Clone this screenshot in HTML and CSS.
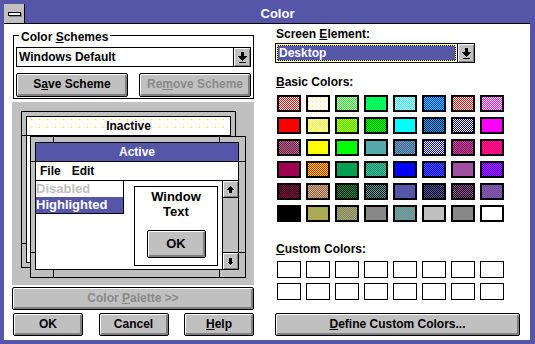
FILE: index.html
```html
<!DOCTYPE html>
<html lang="en">
<head>
    <meta charset="UTF-8">
    <title>Color</title>
    <link rel="stylesheet" href="styles.css">
</head>
<body>
<div class="window">
    <div class="titlebar">
        <div class="sysmenu"><span class="sysbar"></span></div>
        <div class="title">Color</div>
    </div>
    <div class="client">
        <div class="left">
            <div class="group">
                <span class="group-label">Color <u>S</u>chemes</span>
                <div class="combo">
                    <div class="combo-text">Windows Default</div>
                    <div class="combo-btn">
                        <svg width="9" height="11" viewBox="0 0 9 11" shape-rendering="crispEdges"><path d="M3 0h3v4h3l-4.5 5L0 4h3z"/><rect x="1" y="10" width="7" height="1"/></svg>
                    </div>
                </div>
                <div class="scheme-row">
                    <button class="btn scheme-btn">S<u>a</u>ve Scheme</button>
                    <button class="btn scheme-btn disabled">Re<u>m</u>ove Scheme</button>
                </div>
            </div>

            <div class="preview">
                <div class="pv-win pv-inactive">
                    <span class="tick hl" style="top:23px"></span>
                    <span class="tick hl" style="top:131px"></span>
                    <div class="pv-inner">
                        <div class="pv-title inactive">
                            <svg class="dots" width="100%" height="100%" shape-rendering="crispEdges">
                                <defs>
                                    <pattern id="yellowDots" width="8" height="8" patternUnits="userSpaceOnUse">
                                        <rect x="4" y="2" width="1" height="1" fill="#e8e800"/>
                                    </pattern>
                                </defs>
                                <rect width="100%" height="100%" fill="url(#yellowDots)"/>
                            </svg>
                            <span class="pv-title-text">Inactive</span>
                        </div>
                    </div>
                </div>
                <div class="pv-win pv-active">
                    <span class="tick vt" style="left:22px"></span>
                    <span class="tick vt" style="left:188px"></span>
                    <span class="tick vb" style="left:22px"></span>
                    <span class="tick vb" style="left:188px"></span>
                    <span class="tick hl" style="top:24px"></span>
                    <span class="tick hl" style="bottom:24px"></span>
                    <span class="tick hr" style="top:24px"></span>
                    <span class="tick hr" style="bottom:24px"></span>
                    <div class="pv-inner">
                        <div class="pv-title active">Active</div>
                        <div class="pv-menubar"><span class="menu-item">File</span><span>Edit</span></div>
                        <div class="pv-client">
                            <div class="pv-popup">
                                <div class="pv-item disabled">Disabled</div>
                                <div class="pv-item hilite">Highlighted</div>
                            </div>
                            <div class="pv-textbox">
                                <div>Window</div>
                                <div>Text</div>
                                <button class="btn pv-ok">OK</button>
                            </div>
                            <div class="pv-scroll">
                                <div class="pv-sbtn up">
                                    <svg width="7" height="7" viewBox="0 0 7 7" shape-rendering="crispEdges"><path d="M3.5 0L7 3.5H5V7H2V3.5H0z"/></svg>
                                </div>
                                <div class="pv-trough"></div>
                                <div class="pv-sbtn down">
                                    <svg width="7" height="7" viewBox="0 0 7 7" shape-rendering="crispEdges"><path d="M3.5 7L7 3.5H5V0H2V3.5H0z"/></svg>
                                </div>
                            </div>
                        </div>
                    </div>
                </div>
            </div>

            <button class="btn wide-btn disabled">Color <u>P</u>alette &gt;&gt;</button>
            <div class="dlg-row">
                <button class="btn dlg-btn">OK</button>
                <button class="btn dlg-btn">Cancel</button>
                <button class="btn dlg-btn"><u>H</u>elp</button>
            </div>
        </div>

        <div class="right">
            <div class="label element-label">Screen <u>E</u>lement:</div>
            <div class="combo element-combo">
                <div class="combo-text selected"><span class="focus">Desktop</span></div>
                <div class="combo-btn">
                    <svg width="9" height="11" viewBox="0 0 9 11" shape-rendering="crispEdges"><path d="M3 0h3v4h3l-4.5 5L0 4h3z"/><rect x="1" y="10" width="7" height="1"/></svg>
                </div>
            </div>
            <div class="label basic-label"><u>B</u>asic Colors:</div>
            <div class="swatches" id="basicColors"></div>
            <div class="label custom-label"><u>C</u>ustom Colors:</div>
            <div class="swatches custom" id="customColors"></div>
            <button class="btn wide-btn define-btn"><u>D</u>efine Custom Colors...</button>
        </div>
    </div>
</div>

<script>
    // one colour = solid, two colours = checkerboard dither, "dots" = sparse dots on the second colour
    const basicColors = [
        ["#ff0000", "#ffffff"], ["#ffff00", "#ffffff", "dots"], ["#00ff00", "#ffffff"], ["#00ff00", "#00ffaa"],
        ["#00ffff", "#ffffff"], ["#0000ff", "#00ffff"], ["#ff0000", "#ffffff"], ["#ff00ff", "#ffffff"],
        ["#ff0000"], ["#ffff00", "#ffffff"], ["#ffff00", "#00ff00"], ["#00ff00", "#00a000"],
        ["#00ffff"], ["#00c0c0", "#000080"], ["#ffffff", "#000080"], ["#ff00ff"],
        ["#a00050", "#808080"], ["#ffff00"], ["#00ff00"], ["#55aaaa"],
        ["#55aaaa", "#5656a8"], ["#0000ff", "#ffffff"], ["#a00050", "#a050a0"], ["#ff0000", "#ff00ff"],
        ["#a00050"], ["#ffff00", "#ff0000"], ["#00a050"], ["#55aaaa", "#00a050"],
        ["#0000ff"], ["#0000ff", "#5656ff"], ["#a050a0"], ["#ff00ff", "#0000ff"],
        ["#a00050", "#000000"], ["#a05050", "#c0c080"], ["#00a050", "#000000"], ["#55aaaa", "#000000"],
        ["#5656a8"], ["#5656a8", "#000000"], ["#a050a0", "#000000"], ["#a050a0", "#5656a8"],
        ["#000000"], ["#aaaa55"], ["#aaaa55", "#808080"], ["#888888"],
        ["#55aaaa", "#888888"], ["#c0c0c0"], ["#888888"], ["#ffffff"]
    ];

    const svgNS = "http://www.w3.org/2000/svg";
    function rect(x, y, w, h, fill) {
        const r = document.createElementNS(svgNS, "rect");
        r.setAttribute("x", x);
        r.setAttribute("y", y);
        r.setAttribute("width", w);
        r.setAttribute("height", h);
        r.setAttribute("fill", fill);
        return r;
    }

    const basicGrid = document.getElementById("basicColors");
    basicColors.forEach((c, i) => {
        const sw = document.createElement("div");
        sw.className = "swatch";
        const svg = document.createElementNS(svgNS, "svg");
        svg.setAttribute("width", "20");
        svg.setAttribute("height", "13");
        svg.setAttribute("shape-rendering", "crispEdges");
        if (c.length === 1) {
            svg.appendChild(rect(0, 0, 20, 13, c[0]));
        } else {
            const size = c[2] === "dots" ? 4 : 2;
            const pat = document.createElementNS(svgNS, "pattern");
            pat.setAttribute("id", "dither" + i);
            pat.setAttribute("width", size);
            pat.setAttribute("height", size);
            pat.setAttribute("patternUnits", "userSpaceOnUse");
            pat.appendChild(rect(0, 0, size, size, c[1]));
            pat.appendChild(rect(0, 0, 1, 1, c[0]));
            if (size === 2) pat.appendChild(rect(1, 1, 1, 1, c[0]));
            svg.appendChild(pat);
            svg.appendChild(rect(0, 0, 20, 13, "url(#dither" + i + ")"));
        }
        sw.appendChild(svg);
        basicGrid.appendChild(sw);
    });

    const customGrid = document.getElementById("customColors");
    for (let i = 0; i < 16; i++) {
        const sw = document.createElement("div");
        sw.className = "swatch";
        customGrid.appendChild(sw);
    }
</script>
</body>
</html>
```

FILE: styles.css
```css
* {
    box-sizing: border-box;
}
body {
    margin: 0;
    font-family: "Liberation Sans", Arial, sans-serif;
    font-size: 12px;
    font-weight: bold;
    line-height: 14px;
    color: #000;
}
u {
    text-decoration: underline;
    text-underline-offset: 1px;
}

.window {
    width: 535px;
    height: 344px;
    background: #5656a8;
    padding: 4px 5px 4px 4px;
    display: flex;
    flex-direction: column;
}
.titlebar {
    height: 20px;
    display: flex;
    border-bottom: 1px solid #000;
}
.sysmenu {
    width: 21px;
    background: #c0c0c0;
    border-right: 1px solid #000;
    padding: 8px 0 0 4px;
}
.sysbar {
    display: block;
    width: 13px;
    height: 4px;
    border: 1px solid #000;
    background: #fff;
    box-shadow: 1px 1px #808080;
}
.title {
    flex: 1;
    text-align: center;
    color: #fff;
    line-height: 19px;
    font-size: 13px;
}

.client {
    flex: 1;
    background: #fff;
    display: flex;
    padding-left: 8px;
}
.left {
    width: 242px;
    display: flex;
    flex-direction: column;
}
.right {
    width: 245px;
    margin-left: 21px;
    display: flex;
    flex-direction: column;
}

/* buttons */
.btn {
    font: inherit;
    color: #000;
    background: #c0c0c0;
    border: 1px solid #000;
    border-radius: 2px;
    box-shadow: inset 1px 1px #fff, inset -2px -2px #808080;
    padding: 0 0 2px 0;
    height: 23px;
    cursor: pointer;
}
.btn.disabled {
    color: #8a8a8a;
}

/* colour schemes group */
.group {
    position: relative;
    margin: 11px 0 0 1px;
    width: 241px;
    border: 1px solid #000;
    padding: 11px 2px 1px 2px;
}
.group-label {
    position: absolute;
    top: -6px;
    left: 5px;
    background: #fff;
    padding: 0 2px;
}
.combo {
    display: flex;
    height: 20px;
    border: 1px solid #000;
}
.combo-text {
    flex: 1;
    padding-left: 2px;
    line-height: 18px;
}
.combo-btn {
    width: 17px;
    border-left: 1px solid #000;
    background: #c0c0c0;
    box-shadow: inset 1px 1px #fff, inset -1px -1px #808080;
    display: flex;
    align-items: center;
    justify-content: center;
}
.scheme-row {
    display: flex;
    justify-content: space-between;
    margin-top: 6px;
}
.scheme-btn {
    width: 112px;
    height: 24px;
}

/* preview of the scheme */
.preview {
    position: relative;
    margin-top: 3px;
    height: 183px;
    background: #c0c0c0;
}
.pv-win {
    position: absolute;
    border: 1px solid #000;
    background: #c0c0c0;
}
.pv-inactive {
    left: 9px;
    top: 9px;
    width: 215px;
    height: 157px;
    padding: 4px;
}
.pv-active {
    left: 18px;
    top: 34px;
    width: 216px;
    height: 142px;
    padding: 5px 6px 7px 4px;
}
.tick {
    position: absolute;
    background: #000;
}
.tick.hl {
    left: 0;
    width: 4px;
    height: 1px;
}
.tick.hr {
    right: 0;
    width: 6px;
    height: 1px;
}
.tick.vt {
    top: 0;
    width: 1px;
    height: 5px;
}
.tick.vb {
    bottom: 0;
    width: 1px;
    height: 7px;
}
.pv-inner {
    height: 100%;
    border: 1px solid #000;
    background: #fff;
    display: flex;
    flex-direction: column;
}
.pv-title {
    flex: none;
    height: 19px;
    border-bottom: 1px solid #000;
    text-align: center;
    line-height: 18px;
}
.pv-title.inactive {
    position: relative;
}
.dots {
    position: absolute;
    left: 0;
    top: 0;
}
.pv-title-text {
    position: relative;
}
.pv-title.active {
    background: #5656a8;
    color: #fff;
}
.pv-menubar {
    flex: none;
    height: 19px;
    border-bottom: 1px solid #000;
    padding-left: 4px;
    line-height: 18px;
}
.menu-item {
    margin-right: 11px;
}
.pv-client {
    flex: 1;
    display: flex;
}
.pv-popup {
    width: 88px;
    align-self: flex-start;
    border-right: 1px solid #000;
    border-bottom: 1px solid #000;
}
.pv-item {
    height: 16px;
    line-height: 16px;
    font-size: 13px;
}
.pv-item.disabled {
    color: #c0c0c0;
}
.pv-item.hilite {
    background: #5656a8;
    color: #fff;
}
.pv-textbox {
    margin: 5px 0 0 10px;
    width: 84px;
    height: 80px;
    border: 1px solid #000;
    text-align: center;
    padding-top: 2px;
    line-height: 15px;
    font-size: 13px;
}
.pv-ok {
    display: block;
    margin: 11px auto 0;
    width: 59px;
    height: 28px;
}
.pv-scroll {
    margin-left: auto;
    width: 16px;
    border-left: 1px solid #000;
    display: flex;
    flex-direction: column;
    background: #c0c0c0;
}
.pv-sbtn {
    height: 17px;
    display: flex;
    align-items: center;
    justify-content: center;
    box-shadow: inset 1px 1px #fff, inset -1px -1px #808080;
}
.pv-sbtn.up {
    border-bottom: 1px solid #000;
}
.pv-sbtn.down {
    border-top: 1px solid #000;
}
.pv-trough {
    flex: 1;
}

.wide-btn {
    width: 100%;
}
.left .wide-btn {
    margin-top: 2px;
}
.dlg-row {
    display: flex;
    justify-content: space-between;
    margin: 3px 0 0 1px;
}
.dlg-btn {
    width: 70px;
}

/* right column */
.label {
    padding-left: 1px;
}
.element-label {
    margin-top: 3px;
}
.element-combo {
    margin-top: 2px;
    width: 200px;
}
.combo-text.selected {
    padding: 1px;
    background: #fff;
}
.focus {
    display: block;
    height: 100%;
    padding-left: 1px;
    line-height: 15px;
    color: #fff;
    border: 1px dotted #ffff00;
    background: linear-gradient(#5656a8, #5656a8) padding-box, #000;
}
.basic-label {
    margin-top: 12px;
}
.swatches {
    display: grid;
    grid-template-columns: repeat(8, 24px);
    grid-auto-rows: 17px;
    gap: 5px;
    margin: 6px 0 0 2px;
}
.swatch {
    border: 2px solid #000;
}
.swatch svg {
    display: block;
}
.custom-label {
    margin-top: 20px;
}
.swatches.custom {
    margin-top: 5px;
}
.custom .swatch {
    border-width: 1px;
    background: #fff;
}
.define-btn {
    margin-top: 13px;
}
```
